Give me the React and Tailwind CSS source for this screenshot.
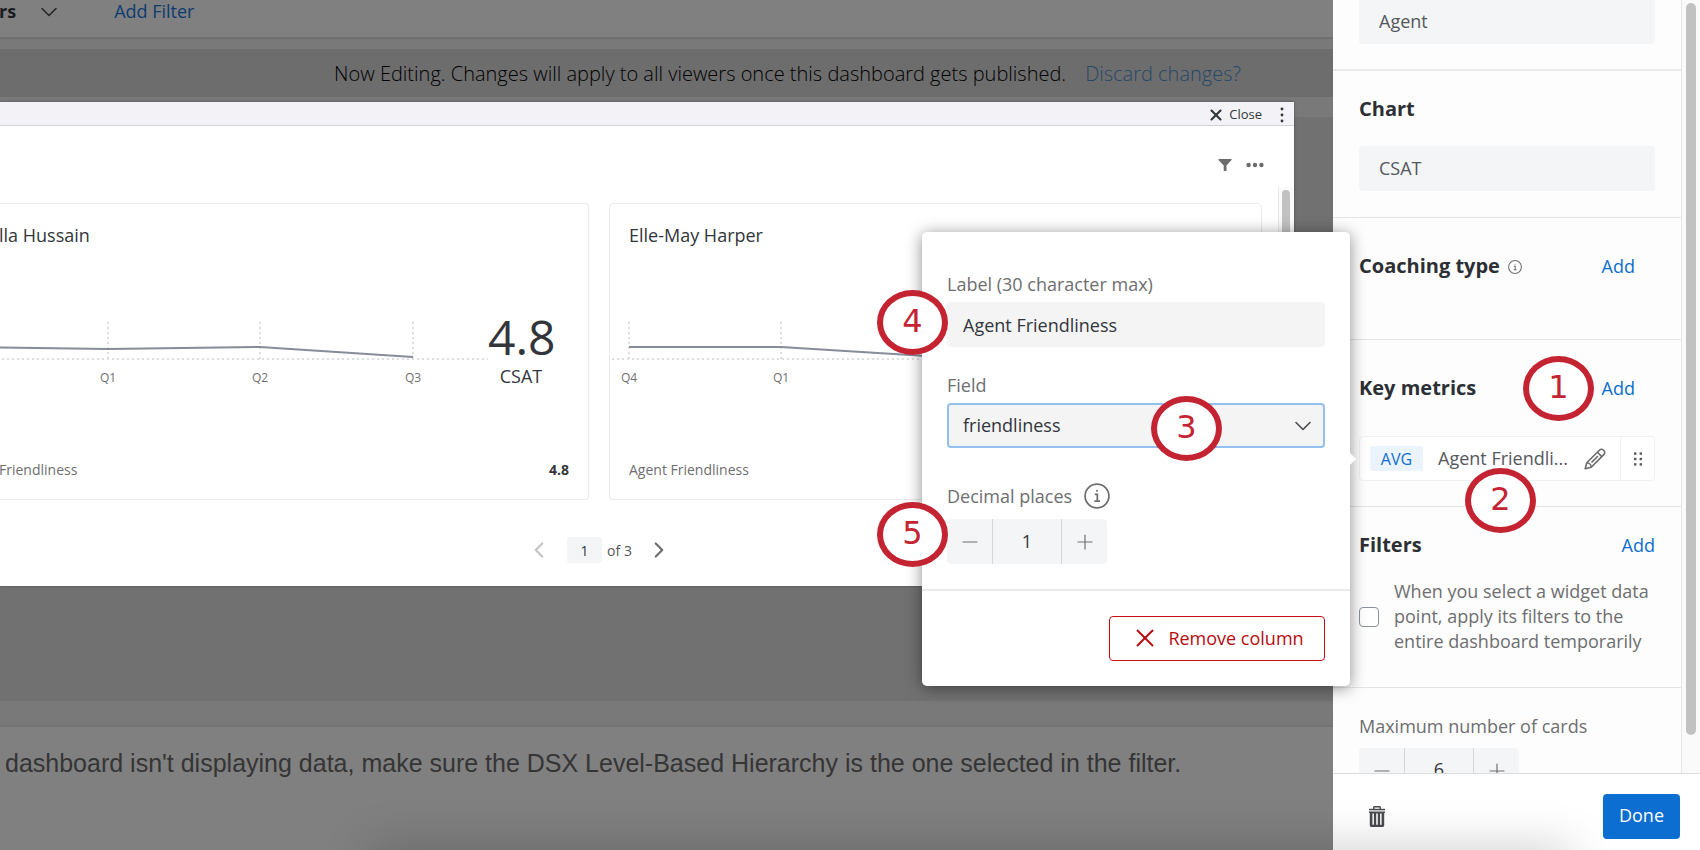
import { ChevronDown, ChevronLeft, ChevronRight, Minus, Plus, X } from 'lucide-react'

function Callout({ children, className = '' }) {
  return (
    <span
      className={`absolute z-30 flex h-[65px] w-[71px] items-center justify-center rounded-[50%] border-6 border-[#c42432] bg-white pb-1 font-['DejaVu_Sans',sans-serif] text-[32px] leading-none text-[#c42432] ${className}`}
    >
      {children}
    </span>
  )
}

function InfoIcon({ size, stroke = 1.5 }) {
  return (
    <svg width={size} height={size} viewBox="0 0 24 24" fill="none" stroke="#6e6e70" strokeWidth={stroke}>
      <circle cx="12" cy="12" r="11" />
      <path d="M10 10.6h2.3v6M9.6 16.8h5.2" />
      <circle cx="12" cy="7.2" r="0.9" fill="#6e6e70" stroke="none" />
    </svg>
  )
}

function FunnelIcon() {
  return (
    <svg width="14" height="14" viewBox="0 0 14 14" fill="#6b6b6b">
      <path d="M.5 1h13v1L8.500 7.600V13H5.700V7.600L.5 2z" />
    </svg>
  )
}

function DotsIcon() {
  return (
    <svg width="18" height="6" viewBox="0 0 18 6" fill="#6b6b6b">
      <circle cx="2.6" cy="3" r="2.2" />
      <circle cx="9" cy="3" r="2.2" />
      <circle cx="15.4" cy="3" r="2.2" />
    </svg>
  )
}

function KebabIcon() {
  return (
    <svg width="4" height="16" viewBox="0 0 4 16" fill="#32363a">
      <circle cx="2" cy="2" r="1.4" />
      <circle cx="2" cy="8" r="1.4" />
      <circle cx="2" cy="14" r="1.4" />
    </svg>
  )
}

function PencilIcon() {
  return (
    <svg width="22" height="22" viewBox="0 0 22 22" fill="none" stroke="#6b6b6b" strokeWidth="1.6" strokeLinejoin="round">
      <path d="M1.200 20.800l1.600-6L15.600 2c1-1 2.600-1 3.600 0l.8.8c1 1 1 2.600 0 3.600L7.200 19.200z" />
      <path d="M2.800 14.800c2.400 0 4.400 2 4.400 4.400M13.400 4.200l4.400 4.400M7.500 14.500L14 8" />
    </svg>
  )
}

function GripIcon() {
  return (
    <svg width="10" height="14" viewBox="0 0 10 14" fill="#55585c">
      {[1.6, 7, 12.4].map((y) => (
        <g key={y}>
          <rect x="1" y={y - 1.2} width="2.4" height="2.4" />
          <rect x="6.6" y={y - 1.2} width="2.4" height="2.4" />
        </g>
      ))}
    </svg>
  )
}

function TrashIcon() {
  return (
    <svg width="18" height="21" viewBox="0 0 18 21" fill="#4a4c50">
      <path d="M5 3V1.500C5 .7 5.600 0 6.500 0h5c.9 0 1.500.7 1.500 1.500V3h-1.500V1.500h-5V3z" />
      <rect x="1" y="2.8" width="16" height="1.5" />
      <path
        fillRule="evenodd"
        d="M1 5.500h16V7h-.8v12.200c0 1-.8 1.800-1.800 1.800H3.600c-1 0-1.800-.8-1.800-1.800V7H1zM4.400 7.500v11.300h1.500V7.500zM8.200 7.500v11.300h1.600V7.500zM12.100 7.500v11.300h1.500V7.500z"
      />
    </svg>
  )
}

function TrendChart({ width, points, ticks }) {
  return (
    <svg viewBox={`0 0 ${width} 66`} className="block w-full overflow-visible" role="img" aria-label="CSAT trend">
      <g stroke="#dddee0" strokeWidth="2" strokeDasharray="2 3">
        <path d={`M0 39H${width}`} />
        {ticks.map((t) => (
          <path key={t.label} d={`M${t.x} 2V39`} />
        ))}
      </g>
      <polyline points={points} fill="none" stroke="#868c98" strokeWidth="2" />
      {ticks.map((t) => (
        <text key={t.label} x={t.x} y="62" textAnchor="middle" fontSize="12" fill="#6e6e70">
          {t.label}
        </text>
      ))}
    </svg>
  )
}

function ScoreCard({ name, metric, chart, className = '' }) {
  return (
    <article className={`flex h-[297px] flex-col border border-[#e9eaeb] ${className}`}>
      <h3 className="mt-[19px] px-[19px] text-[18px] leading-6 text-[#32363a]">{name}</h3>
      <div className="mt-[73px] flex items-start">
        <div className="min-w-0 flex-1 pl-[2px]">{chart}</div>
        <div className="-mt-[10px] mr-[34px] w-[66px] text-center text-[#32363a]">
          <div className="text-[48px] leading-[54px]">4.8</div>
          <div className="text-[18px] leading-6">CSAT</div>
        </div>
      </div>
      <div className="mt-auto mb-[18px] flex justify-between px-[19px] text-[14px] leading-[22px] text-[#6e6e70]">
        <span>{metric}</span>
        <b className="font-bold text-[#32363a]">4.8</b>
      </div>
    </article>
  )
}

function WidgetWindow() {
  return (
    <div className="absolute top-[102px] right-[39px] left-0 z-10 bg-white shadow-[0_0_3px_rgba(0,0,0,0.3)]">
      <div className="flex h-6 items-center justify-end border-b border-[#d2d2d6] bg-[#f2f2f7] pt-[2px] pr-[10px]">
        <button type="button" className="flex items-center gap-1 text-[13px] text-[#32363a]">
          <X size={18} strokeWidth={2.8} />
          Close
        </button>
        <button type="button" aria-label="Window menu" className="ml-[18px]">
          <KebabIcon />
        </button>
      </div>
      <div className="flex h-[61px] items-center justify-end gap-[14px] pt-[17px] pr-[30px]">
        <button type="button" aria-label="Filter">
          <FunnelIcon />
        </button>
        <button type="button" aria-label="More">
          <DotsIcon />
        </button>
      </div>
      <div className="relative pt-4 pr-8">
        <div className="grid grid-cols-[589fr_653fr] gap-5">
          <ScoreCard
            name={<span className="-ml-5">lla Hussain</span>}
            metric={<span className="-ml-5">Friendliness</span>}
            className="rounded-r-[4px] border-l-0"
            chart={
              <TrendChart
                width={486}
                points="-2,27.5 106,29 258,27 411,37"
                ticks={[
                  { x: 106, label: 'Q1' },
                  { x: 258, label: 'Q2' },
                  { x: 411, label: 'Q3' },
                ]}
              />
            }
          />
          <ScoreCard
            name="Elle-May Harper"
            metric="Agent Friendliness"
            className="rounded-[4px]"
            chart={
              <TrendChart
                width={549}
                points="17,27 169,27 322,36.5 474,37"
                ticks={[
                  { x: 17, label: 'Q4' },
                  { x: 169, label: 'Q1' },
                  { x: 322, label: 'Q2' },
                  { x: 474, label: 'Q3' },
                ]}
              />
            }
          />
        </div>
        <div className="absolute top-0 right-0 h-[313px] w-4 border-l border-[#e8e8e8] bg-[#fafafa] pt-[3px] pl-[3px]">
          <div className="h-[200px] w-2 rounded-full bg-[#c1c1c1]" />
        </div>
      </div>
      <nav className="-ml-16 flex h-[86px] items-center justify-center pt-[14px] pr-8 text-[14px] text-[#55585c]">
        <button type="button" aria-label="Previous page" className="text-[#c3c4c6]">
          <ChevronLeft size={26} strokeWidth={2} />
        </button>
        <input
          aria-label="Page"
          defaultValue="1"
          className="mr-[5px] ml-[15px] h-[26px] w-[35px] rounded-[3px] bg-[#f4f5f7] text-center text-[#32363a]"
        />
        <span>of 3</span>
        <button type="button" aria-label="Next page" className="ml-[14px] text-[#6e6e70]">
          <ChevronRight size={26} strokeWidth={2} />
        </button>
      </nav>
    </div>
  )
}

function Dashboard() {
  return (
    <main className="relative flex min-w-0 flex-1 flex-col bg-[#797979]">
      <div className="flex h-[39px] items-center border-b-2 border-[#707070] bg-[#808080] pb-[14px] text-[18px]">
        <b className="-ml-px font-bold text-[#1a1c1e]">rs</b>
        <button type="button" aria-label="Show filters" className="ml-[19px] text-[#26282a]">
          <ChevronDown size={28} strokeWidth={1.4} />
        </button>
        <a href="#add-filter" className="ml-[51px] text-[#0b3c70]">Add Filter</a>
      </div>
      <p className="mt-[10px] flex h-12 items-center justify-center gap-[19px] bg-[#6d6d6d] pt-[2px] pl-[242px] text-[20px] font-light whitespace-nowrap text-black">
        Now Editing. Changes will apply to all viewers once this dashboard gets published.
        <a href="#discard" className="text-[#25486a]">Discard changes?</a>
      </p>
      <div className="mt-5 flex-1 bg-[#717171]" />
      <div className="mt-6 h-[125px] border-t-2 border-[#737373] bg-[#808080] pt-5 pl-[5px] font-['Liberation_Sans',Arial,sans-serif] text-[25px] leading-8 whitespace-nowrap text-[#353535]">
        dashboard isn't displaying data, make sure the DSX Level-Based Hierarchy is the one selected in the filter.
      </div>
      <WidgetWindow />
    </main>
  )
}

function Stepper({ id, value }) {
  return (
    <div className="flex h-[45px] w-[160px] shrink-0 rounded-[4px] bg-[#f4f5f6] text-[#6e6e70]">
      <button type="button" aria-label="Decrease" className="flex w-[45px] items-center justify-center">
        <Minus size={24} strokeWidth={1.2} />
      </button>
      <input
        id={id}
        defaultValue={value}
        className="w-[70px] border-x border-[#d5d6d8] pb-[2px] text-center text-[18px] text-[#32363a]"
      />
      <button type="button" aria-label="Increase" className="flex w-[45px] items-center justify-center">
        <Plus size={24} strokeWidth={1.2} />
      </button>
    </div>
  )
}

function MetricPopover() {
  return (
    <div className="absolute top-[232px] right-[350px] z-20 w-[428px] rounded-[5px] bg-white text-[18px] leading-6 text-[#6e6e70] shadow-[0_2px_16px_rgba(0,0,0,0.45)]">
      <div className="flex flex-col px-[25px] pt-10 pb-[25px]">
        <label htmlFor="metric-label">Label (30 character max)</label>
        <div className="relative mt-[6px]">
          <input
            id="metric-label"
            defaultValue="Agent Friendliness"
            className="h-[45px] w-full rounded-[4px] bg-[#f4f4f5] px-4 text-[#32363a]"
          />
          <Callout className="top-[-12px] left-[-70px]">4</Callout>
        </div>
        <label htmlFor="metric-field" className="mt-[26px]">Field</label>
        <div className="relative mt-[6px]">
          <select
            id="metric-field"
            className="h-[45px] w-full appearance-none rounded-[4px] border-2 border-[#94c0ee] bg-[#f4f4f5] px-[14px] pb-[2px] text-[#32363a]"
          >
            <option>friendliness</option>
          </select>
          <ChevronDown
            size={28}
            strokeWidth={1.4}
            className="pointer-events-none absolute top-[9px] right-2 text-[#4a4c50]"
          />
          <Callout className="top-[-7px] left-[204px]">3</Callout>
        </div>
        <div className="mt-9 flex h-6 items-center gap-3">
          <label htmlFor="metric-decimals">Decimal places</label>
          <InfoIcon size={26} stroke={1.6} />
        </div>
        <div className="relative mt-[11px]">
          <Stepper id="metric-decimals" value="1" />
          <Callout className="top-[-17px] left-[-70px]">5</Callout>
        </div>
      </div>
      <div className="flex justify-end border-t-2 border-[#e9eaeb] p-[25px]">
        <button
          type="button"
          className="flex h-[45px] w-[216px] items-center justify-center gap-2 rounded-[4px] border border-[#c41015] pb-px text-[#b80c11]"
        >
          <X size={30} strokeWidth={1.5} />
          Remove column
        </button>
      </div>
      <span className="absolute top-[222px] -right-1 h-[10px] w-[10px] rotate-45 bg-white" />
    </div>
  )
}

function SectionTitle({ children }) {
  return <h2 className="text-[20px] leading-7 font-bold text-[#2c2f33]">{children}</h2>
}

function SettingsPanel() {
  return (
    <aside className="relative flex w-[367px] shrink-0 flex-col bg-[#fdfdfd] text-[18px]">
      <div className="flex min-h-0 flex-1">
        <div className="flex min-w-0 flex-1 flex-col overflow-hidden">
          <section className="shrink-0 border-b-2 border-[#e9eaeb] px-[26px] pb-[25px]">
            <input
              aria-label="Agent field"
              defaultValue="Agent"
              className="-mt-px block h-[45px] w-full rounded-[4px] bg-[#f4f5f6] px-5 pb-[2px] text-[#55585c]"
            />
          </section>
          <section className="shrink-0 border-b border-[#e4e5e6] px-[26px] pt-6 pb-[26px]">
            <SectionTitle>Chart</SectionTitle>
            <input
              aria-label="Chart"
              defaultValue="CSAT"
              className="mt-[23px] block h-[45px] w-full rounded-[4px] bg-[#f4f5f6] px-5 pb-[2px] text-[#55585c]"
            />
          </section>
          <section className="flex h-[122px] shrink-0 items-start border-b border-[#e4e5e6] pt-[34px] pr-[46px] pl-[26px]">
            <SectionTitle>Coaching type</SectionTitle>
            <span className="mt-2 ml-2">
              <InfoIcon size={14} stroke={1.8} />
            </span>
            <button type="button" className="ml-auto leading-7 text-[#0b6ed0]">Add</button>
          </section>
          <section className="h-[167px] shrink-0 border-b border-[#e4e5e6] px-[26px] pt-[34px]">
            <div className="relative flex items-center justify-between pr-5">
              <SectionTitle>Key metrics</SectionTitle>
              <button type="button" className="leading-7 text-[#0b6ed0]">Add</button>
              <Callout className="top-[-18px] left-[164px]">1</Callout>
            </div>
            <div className="relative mt-[34px] flex h-[45px] items-center rounded-[4px] border border-[#f0f1f2] bg-white">
              <span className="ml-[10px] flex h-[25px] w-[53px] items-center justify-center rounded-[2px] bg-[#ebf3fc] text-[16px] text-[#0b6ed0]">
                AVG
              </span>
              <span className="ml-[15px] whitespace-nowrap text-[#55585c]">Agent Friendli...</span>
              <button type="button" aria-label="Edit metric" className="mr-[14px] ml-auto">
                <PencilIcon />
              </button>
              <button
                type="button"
                aria-label="Move metric"
                className="flex h-full w-[34px] items-center justify-center border-l border-[#f0f1f2]"
              >
                <GripIcon />
              </button>
              <Callout className="top-[31px] left-[105px]">2</Callout>
            </div>
          </section>
          <section className="h-[181px] shrink-0 border-b border-[#e4e5e6] px-[26px] pt-6">
            <div className="flex items-center justify-between">
              <SectionTitle>Filters</SectionTitle>
              <button type="button" className="leading-7 text-[#0b6ed0]">Add</button>
            </div>
            <div className="mt-5 flex items-center gap-[15px]">
              <input
                id="apply-filters"
                type="checkbox"
                className="h-5 w-5 shrink-0 appearance-none rounded-[4px] border border-[#8a919c] bg-white"
              />
              <label htmlFor="apply-filters" className="leading-[25px] text-[#6e6e70]">
                When you select a widget data point, apply its filters to the entire dashboard temporarily
              </label>
            </div>
          </section>
          <section className="shrink-0 px-[26px] pt-[26px]">
            <label htmlFor="max-cards" className="mb-[10px] block leading-6 text-[#6e6e70]">
              Maximum number of cards
            </label>
            <Stepper id="max-cards" value="6" />
          </section>
        </div>
        <div className="w-[19px] border-l border-[#e6e6e6] bg-[#fafafa] pt-[3px] pl-1">
          <div className="h-[732px] w-[10px] rounded-full bg-[#c1c1c1]" />
        </div>
      </div>
      <footer className="z-10 flex h-[77px] shrink-0 items-center justify-between border-t border-[#dcdddd] bg-white pt-[10px] pr-5 pb-px pl-[35px]">
        <button type="button" aria-label="Delete widget">
          <TrashIcon />
        </button>
        <button type="button" className="h-[45px] w-[77px] rounded-[4px] bg-[#0b6ed0] pb-[2px] text-white">
          Done
        </button>
      </footer>
      <MetricPopover />
    </aside>
  )
}

export default function App() {
  return (
    <div className="relative flex h-screen overflow-hidden font-['Open_Sans',sans-serif]">
      <Dashboard />
      <SettingsPanel />
      <div className="pointer-events-none absolute top-full right-[130px] left-[370px] z-40 h-10 shadow-[0_0_50px_rgba(0,0,0,0.22)]" />
    </div>
  )
}
